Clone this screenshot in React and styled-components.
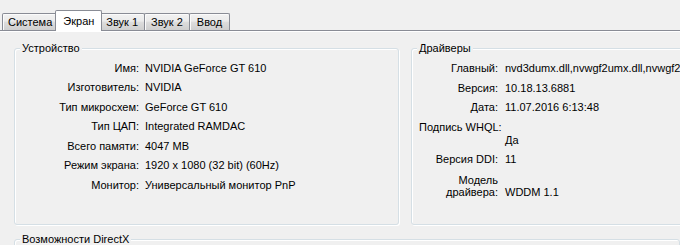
import React from "react";
import styled, { createGlobalStyle } from "styled-components";

const GlobalStyle = createGlobalStyle`
  html, body {
    margin: 0;
    background: #f0f0f0;
    overflow: hidden;
  }
  body {
    font-family: "Liberation Sans", Arial, sans-serif;
    font-size: 11px;
    color: #000;
  }
`;

const Window = styled.div`
  width: 680px;
  height: 245px;
  overflow: hidden;
`;

const TabStrip = styled.div`
  display: flex;
  align-items: flex-end;
  height: 30px;
  padding-left: 2px;
  position: relative;
  z-index: 1;
`;

const Tab = styled.div`
  box-sizing: border-box;
  height: ${p => (p.$active ? 21 : 17)}px;
  margin: ${p => (p.$active ? "0 -2px -1px" : "0")};
  margin-left: ${p => (p.$first ? 0 : p.$active ? -3 : -1)}px;
  padding: ${p => (p.$active ? "0 7px" : `0 ${p.$pad}px`)};
  border: 1px solid #898c95;
  border-bottom: none;
  border-radius: 2px 2px 0 0;
  background: ${p =>
    p.$active
      ? "#fff"
      : "linear-gradient(#f2f2f2 0%, #ebebeb 45%, #dddddd 50%, #cfcfcf 100%)"};
  box-shadow: ${p => (p.$active ? "none" : "inset 1px 1px 0 #fbfbfb")};
  display: flex;
  align-items: center;
  position: relative;
  z-index: ${p => (p.$active ? 2 : 1)};
  white-space: nowrap;
`;

const Panel = styled.div`
  border-top: 1px solid #898c95;
  box-shadow: inset 0 1px 0 #fff;
  padding: 11px 0 0 14px;
  display: flex;
  flex-direction: column;
  gap: 8px;
`;

const Columns = styled.div`
  display: grid;
  grid-template-columns: 385px 400px;
  column-gap: 12px;
`;

const GroupBox = styled.fieldset`
  box-sizing: border-box;
  margin: 0;
  padding: 6.5px 0 0;
  min-width: 0;
  height: ${p => p.$h}px;
  border: 1px solid #d5dfe5;
  border-radius: 3px;
  box-shadow: inset 1px 1px 0 #fff, 1px 1px 0 #fff;
`;

const Legend = styled.legend`
  margin-left: 5px;
  padding: 0 2px;
  line-height: 13px;
  background: #f0f0f0;
`;

const Row = styled.div`
  display: grid;
  grid-template-columns: ${p => p.$lw}px auto;
  column-gap: ${p => p.$gap}px;
  height: ${p => p.$h}px;
  line-height: ${p => p.$lh || 13}px;
  align-items: ${p => (p.$end ? "end" : "start")};
  white-space: nowrap;
`;

const Label = styled.span`
  text-align: right;
`;

const WideLabel = styled.span`
  grid-column: 1 / -1;
  padding-left: 7px;
`;

const Value = styled.span``;

const device = [
  ["Имя:", "NVIDIA GeForce GT 610"],
  ["Изготовитель:", "NVIDIA"],
  ["Тип микросхем:", "GeForce GT 610"],
  ["Тип ЦАП:", "Integrated RAMDAC"],
  ["Всего памяти:", "4047 MB"],
  ["Режим экрана:", "1920 x 1080 (32 bit) (60Hz)"],
  ["Монитор:", "Универсальный монитор PnP"],
];

const tabs = [
  { name: "Система", pad: 5 },
  { name: "Экран", pad: 7 },
  { name: "Звук 1", pad: 6 },
  { name: "Звук 2", pad: 6 },
  { name: "Ввод", pad: 7 },
];

export default function App() {
  return (
    <Window>
      <GlobalStyle />
      <TabStrip>
        {tabs.map((t, i) => (
          <Tab key={t.name} $first={i === 0} $pad={t.pad} $active={t.name === "Экран"}>
            {t.name}
          </Tab>
        ))}
      </TabStrip>
      <Panel>
        <Columns>
          <GroupBox $h={183}>
            <Legend>Устройство</Legend>
            {device.map(([l, v]) => (
              <Row key={l} $lw={124} $gap={6} $h={19.5}>
                <Label>{l}</Label>
                <Value>{v}</Value>
              </Row>
            ))}
          </GroupBox>
          <GroupBox $h={183}>
            <Legend>Драйверы</Legend>
            <Row $lw={86} $gap={7} $h={20}>
              <Label>Главный:</Label>
              <Value>nvd3dumx.dll,nvwgf2umx.dll,nvwgf2umx.dll</Value>
            </Row>
            <Row $lw={86} $gap={7} $h={19}>
              <Label>Версия:</Label>
              <Value>10.18.13.6881</Value>
            </Row>
            <Row $lw={86} $gap={7} $h={20}>
              <Label>Дата:</Label>
              <Value>11.07.2016 6:13:48</Value>
            </Row>
            <Row $lw={86} $gap={7} $h={13}>
              <WideLabel>Подпись WHQL:</WideLabel>
            </Row>
            <Row $lw={86} $gap={7} $h={19}>
              <Label />
              <Value>Да</Value>
            </Row>
            <Row $lw={86} $gap={7} $h={21.5}>
              <Label>Версия DDI:</Label>
              <Value>11</Value>
            </Row>
            <Row $lw={86} $gap={7} $h={24} $lh={12} $end>
              <Label>
                Модель
                <br />
                драйвера:
              </Label>
              <Value>WDDM 1.1</Value>
            </Row>
          </GroupBox>
        </Columns>
        <GroupBox $h={40}>
          <Legend>Возможности DirectX</Legend>
        </GroupBox>
      </Panel>
    </Window>
  );
}
